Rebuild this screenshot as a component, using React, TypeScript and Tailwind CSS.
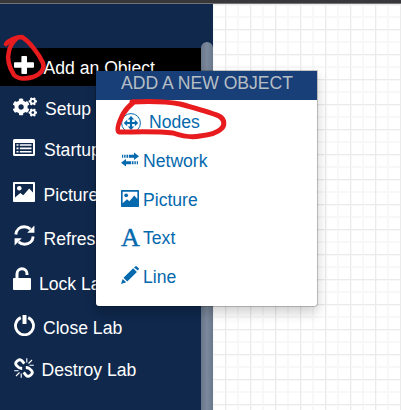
import type { ReactNode } from "react";
import { FaCogs } from "react-icons/fa";

type IconProps = { className?: string };

function PlusIcon({ className }: IconProps) {
  return (
    <svg className={className} viewBox="0 0 20 20" fill="currentColor" preserveAspectRatio="none">
      <path d="M8.300 0h3.800q.9 0 .9.8v5.900h6.100q.9 0 .9.800v4q0 .8-.9.8H13v5.900q0 .8-.9.8H8.300q-.9 0-.9-.8v-5.900H.9q-.9 0-.9-.8v-4q0-.8.9-.8h6.500V.8q0-.8.9-.8z" />
    </svg>
  );
}

function ListIcon({ className }: IconProps) {
  return (
    <svg className={className} viewBox="0 0 22 17" fill="currentColor">
      <path fillRule="evenodd" d="M1.500 0h19Q22 0 22 1.500v14q0 1.500-1.500 1.500h-19Q0 17 0 15.500v-14Q0 0 1.500 0zM2 4v11h18V4z" />
      <path d="M3.500 5.200h2v1.600h-2zM6.800 5.200h11.700v1.600H6.800zM3.500 8.600h2v1.600h-2zM6.800 8.600h11.700v1.600H6.800zM3.500 12h2v1.600h-2zM6.800 12h11.700v1.600H6.800z" />
    </svg>
  );
}

function PictureIcon({ className }: IconProps) {
  return (
    <svg className={className} viewBox="0 0 22 20" fill="currentColor" preserveAspectRatio="none">
      <path fillRule="evenodd" d="M.8 0h20.400q.800 0 .8.8v18.400q0 .8-.8.8H.8Q0 20 0 19.200V.8Q0 0 .8 0zM2 2v13.500L7.300 11l3 2.300L16.200 6.500 20 10.500V2z" />
      <circle cx="6.300" cy="6.300" r="2.300" />
    </svg>
  );
}

function RefreshIcon({ className }: IconProps) {
  return (
    <svg className={className} viewBox="0 0 21 21">
      <path d="M1.800 9.500C2.300 4.500 6 1.700 10.300 1.700c2.400 0 4.400.8 6.100 2.400M19.200 11.500c-.5 5-4.200 7.800-8.500 7.800-2.400 0-4.400-.8-6.100-2.400" fill="none" stroke="currentColor" strokeWidth="2.900" />
      <path d="M20.400.5v7.200h-7.200zM.6 20.500v-7.200h7.200z" fill="currentColor" />
    </svg>
  );
}

function UnlockIcon({ className }: IconProps) {
  return (
    <svg className={className} viewBox="0 0 18 23">
      <rect y="11" width="18" height="12" rx=".9" fill="currentColor" />
      <path d="M4 11.500V6.800a5 5 0 0 1 10 0V8" fill="none" stroke="currentColor" strokeWidth="3" />
    </svg>
  );
}

function PowerIcon({ className }: IconProps) {
  return (
    <svg className={className} viewBox="0 0 21 21" fill="none" stroke="currentColor">
      <path d="M6.800 2.600a9 9 0 1 0 7.400 0" strokeWidth="2.800" />
      <path d="M10.500 0v9" strokeWidth="4" />
    </svg>
  );
}

function BrokenChainIcon({ className }: IconProps) {
  return (
    <svg className={className} viewBox="0 0 20 20" fill="none" stroke="currentColor">
      <path d="M10.300 5.600 8 2.800Q6 .8 4 2.400L2.500 3.800Q.8 5.600 2.600 7.600L5 9.700q1 .8 3.200.8M9.700 14.400l2.300 2.800q2 2 4 .4l1.500-1.400q1.700-1.800-.1-3.800L15 10.300q-1-.8-3.200-.8" strokeWidth="2.800" />
      <path d="M12.800.2v4.300M18 2l-3.500 3.500M19.800 7.200h-4.300M7.200 19.800v-4.300M2 18l3.500-3.500M.2 12.800h4.300" strokeWidth="1.100" />
    </svg>
  );
}

function MoveIcon({ className }: IconProps) {
  return (
    <svg className={className} viewBox="0 0 20 20" fill="currentColor">
      <circle cx="10" cy="10" r="9.400" fill="none" stroke="currentColor" />
      <path d="m10 3 3.200 3.400h-2.100v2.500h2.700V6.800L17.200 10l-3.400 3.200v-2.100h-2.700v2.500h2.100L10 17l-3.200-3.400h2.100v-2.500H6.200v2.100L2.800 10l3.400-3.200v2.100h2.700V6.400H6.800z" />
    </svg>
  );
}

function TransferIcon({ className }: IconProps) {
  return (
    <svg className={className} viewBox="0 0 18 14" fill="currentColor">
      <path d="M1 2.200h1.200v3H1zM3.200 2.200h1.400v3H3.200zM5.500 2.200h1.500v3H5.500zM7.800 2.200H13V0l5 3.700-5 3.700V5.200H7.800zM17 8.800h-1.200v3H17zM14.800 8.800h-1.400v3h1.400zM12.500 8.800H11v3h1.500zM10.200 8.800H5V6.600l-5 3.700L5 14v-2.200h5.200z" />
    </svg>
  );
}

function PencilIcon({ className }: IconProps) {
  return (
    <svg className={className} viewBox="0 0 18 18" fill="currentColor">
      <path d="m14.200.5.6-.3q.5-.3 1 .2l1.900 1.900q.5.500.1 1l-1 1.300-3.800-3.200zM12.200 2.300l3.700 3.600-9.600 9.500-3.800-3.600zM1.700 12.900l3.500 3.400L0 18z" />
    </svg>
  );
}

type SidebarItem = { label: string; icon: ReactNode; row: string; text: string };

const items: SidebarItem[] = [
  { label: "Add an Object", icon: <PlusIcon className="ml-[13.5px] mt-2 h-[19px] w-5" />, row: "h-[38px] bg-black", text: "ml-[10px] mt-[10px]" },
  { label: "Setup", icon: <FaCogs className="ml-[13px] mt-[10px] h-[22px] w-6" />, row: "h-[45px]", text: "ml-2 mt-[13px]" },
  { label: "Startup", icon: <ListIcon className="ml-[13px] mt-2 h-[17px] w-[22px]" />, row: "h-[39px]", text: "ml-[9px] mt-[9px]" },
  { label: "Picture", icon: <PictureIcon className="ml-[13px] mt-3 h-5 w-[22px]" />, row: "h-[50px]", text: "ml-[8.5px] mt-[15px]" },
  { label: "Refresh", icon: <RefreshIcon className="ml-[14px] mt-[5px] size-[21px]" />, row: "h-[38px]", text: "ml-[8.5px] mt-[9px]" },
  { label: "Lock Lab", icon: <UnlockIcon className="ml-[13px] mt-[9px] h-[23px] w-[18px]" />, row: "h-[52px]", text: "ml-2 mt-4" },
  { label: "Close Lab", icon: <PowerIcon className="ml-[14px] mt-[5px] size-[21px]" />, row: "h-9", text: "ml-2 mt-2" },
  { label: "Destroy Lab", icon: <BrokenChainIcon className="ml-[14px] mt-3 size-5" />, row: "h-12", text: "ml-[7.5px] mt-[14px]" },
];

const objects = [
  { label: "Network", icon: <TransferIcon className="mb-1 h-[15px] w-[18px]" /> },
  { label: "Picture", icon: <PictureIcon className="mb-0.5 h-[17px] w-[18px]" /> },
  { label: "Text", icon: <span className="w-[18px] text-center font-['Liberation_Serif',serif] text-[26px] leading-5 [-webkit-text-stroke:0.4px]">A</span> },
  { label: "Line", icon: <PencilIcon className="mb-1 size-[18px]" /> },
];

export default function App() {
  return (
    <div className="relative flex h-[410px] w-[401px] flex-col overflow-hidden bg-white font-['Liberation_Sans',Arial,sans-serif] text-[17.6px] leading-5">
      <div className="h-1 shrink-0 border-b border-[#737377] bg-[#38383a]" />
      <div className="flex min-h-0 flex-1">
        <aside className="flex w-[213px] shrink-0 bg-[#0f284c] text-white">
          <nav className="w-[201px] pt-11">
            {items.map((item) => (
              <div key={item.label} className={`flex items-start whitespace-nowrap ${item.row}`}>
                <span className="shrink-0">{item.icon}</span>
                <span className={item.text}>{item.label}</span>
              </div>
            ))}
          </nav>
          <div className="flex w-3 flex-col pt-[38px]">
            <div className="flex-1 rounded-t-md bg-linear-to-r from-[#69778a] via-[#7c899c] to-[#69778a]" />
          </div>
        </aside>
        <main className="flex-1">
          <svg className="h-full w-full" shapeRendering="crispEdges">
            <defs>
              <pattern id="grid" x="12" y="0" width="25" height="25" patternUnits="userSpaceOnUse">
                <path d="M12 0h2v25h-2zM0 12h25v2H0z" fill="#f8f8f9" />
                <path d="M0 0h1v25H0zM0 0h25v1H0z" fill="#ebebec" />
                <path d="M1 1h1v24H1zM1 1h24v1H1z" fill="#f8f8f8" />
              </pattern>
            </defs>
            <rect width="100%" height="100%" fill="url(#grid)" />
          </svg>
        </main>
      </div>

      <div className="absolute left-[95px] top-[70px] h-[237px] w-[223px] rounded-b border border-black/20 bg-white bg-clip-padding text-[#0569ae] shadow-[0_6px_12px_rgba(0,0,0,0.18)]">
        <div className="h-[29px] whitespace-nowrap bg-[#193f78] pl-[25px] pt-[2px] text-[17.6px] text-[#b5bec4]">ADD A NEW OBJECT</div>
        <div className="flex h-[42px] items-center gap-2 pl-[25px]">
          <MoveIcon className="mt-1 size-5" />
          <span className="mt-px">Nodes</span>
        </div>
        {objects.map((object) => (
          <div key={object.label} className="flex h-[38.600px] items-center gap-1 pl-[25px]">
            {object.icon}
            <span>{object.label}</span>
          </div>
        ))}
      </div>

      <svg className="absolute inset-0" width="401" height="410" fill="none" stroke="#e81c1e" strokeLinecap="round" strokeLinejoin="round">
        <path d="M6 44C9 40 16 37 22 37C29 41 39 54 43 63C45 69 41 74 33 77C26 79 18 79 14 75C9 67 7 58 9 51C10 46 13 42 17 38" strokeWidth="4.500" />
        <path d="M132 102C150 101 169 102 180 104C194 108 210 112 219 116C225 119 225 126 221 129C217 133 209 135 200 136C191 138 182 136 173 133C157 131 136 132 119 132C116 130 119 122 123 114C126 109 130 105 134 102" strokeWidth="5" />
      </svg>
    </div>
  );
}
